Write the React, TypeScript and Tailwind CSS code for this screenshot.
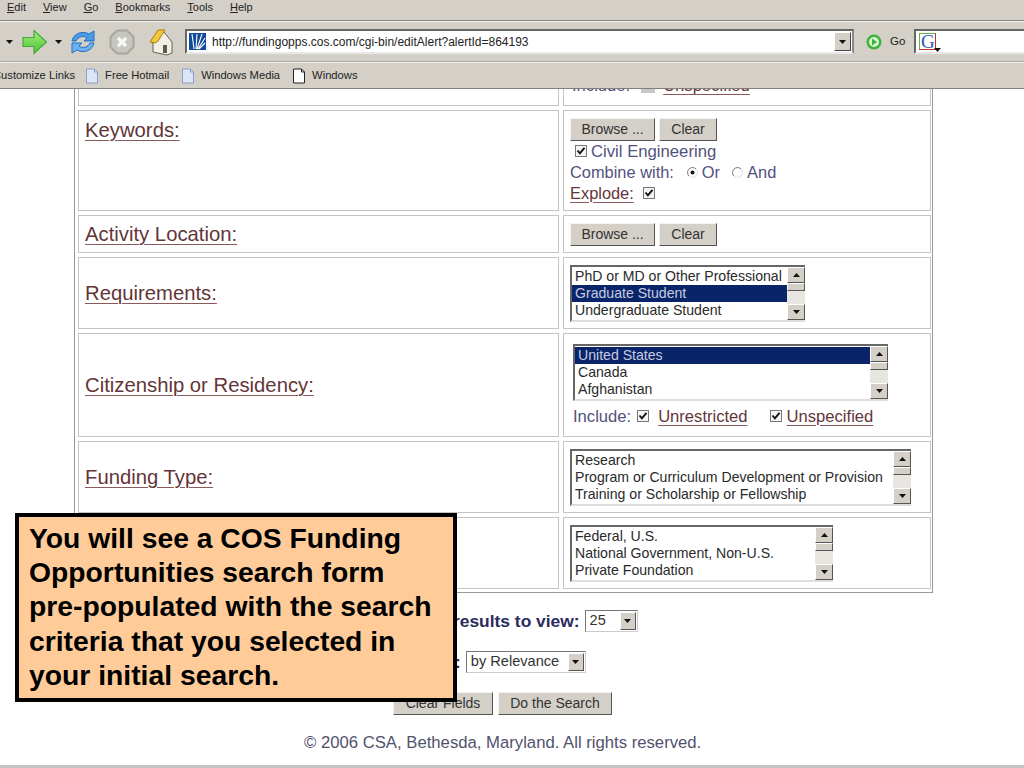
import React from "react";

const labelText = "text-[#633538] underline underline-offset-[3px] decoration-1 decoration-[#8a5a5a]";
const blueText = "text-[#52527e]";

const ArrowDown = () => (
  <svg width="7" height="4" viewBox="0 0 7 4"><path d="M0 0h7L3.5 4z" fill="#111" /></svg>
);

const ArrowUp = () => (
  <svg width="7" height="4" viewBox="0 0 7 4"><path d="M0 4h7L3.5 0z" fill="#111" /></svg>
);

const Check = () => (
  <svg width="12" height="12" viewBox="0 0 12 12" className="shrink-0">
    <rect x="0.5" y="0.5" width="11" height="11" fill="#f4f4f4" stroke="#777" />
    <path d="M2.5 5.5l2.4 2.8 4.6-5.4" fill="none" stroke="#111" strokeWidth="1.9" />
  </svg>
);

const Radio = ({ on }: { on?: boolean }) => (
  <svg width="11" height="11" viewBox="0 0 11 11" className="shrink-0">
    <path d="M2 9a4.8 4.8 0 0 1 7-7" fill="none" stroke="#777" />
    <path d="M9 2a4.8 4.8 0 0 1-7 7" fill="none" stroke="#ddd" />
    {on && <circle cx="5.5" cy="5.5" r="2" fill="#111" />}
  </svg>
);

const Button = ({ children, className = "" }: { children: React.ReactNode; className?: string }) => (
  <div className={`flex items-center justify-center h-[23px] bg-[#d4d0c8] border border-t-[#f4f4f0] border-l-[#f4f4f0] border-r-[#555] border-b-[#555] text-[14px] text-[#333] ${className}`}>
    {children}
  </div>
);

const ListBox = ({
  items,
  selected,
  width,
}: {
  items: string[];
  selected?: number;
  width: string;
}) => (
  <div className={`flex h-[57px] bg-white border-2 border-r-0 border-t-[#666] border-l-[#666] border-b-[#ddd] overflow-hidden ${width}`}>
    <div className="flex-1 min-w-0 pt-[1px] text-[14.1px] leading-[17px] text-[#2a2a2a] whitespace-nowrap">
      {items.map((item, i) => (
        <div key={item} className={`pl-[3px] h-[17px] ${i === selected ? "bg-[#0a246a] text-[#c8cce0]" : ""}`}>
          {item}
        </div>
      ))}
    </div>
    <div className="w-[18px] flex flex-col bg-[#e8e6e0]">
      <div className="h-[16px] flex items-center justify-center bg-[#d4d0c8] border border-t-[#fff] border-l-[#fff] border-r-[#555] border-b-[#555]">
        <ArrowUp />
      </div>
      <div className="h-[8px] bg-[#d4d0c8] border border-r-[#555] border-b-[#555] border-t-[#fff] border-l-[#fff]" />
      <div className="flex-1" />
      <div className="h-[16px] flex items-center justify-center bg-[#d4d0c8] border border-t-[#fff] border-l-[#fff] border-r-[#555] border-b-[#555]">
        <ArrowDown />
      </div>
    </div>
  </div>
);

const Dropdown = ({ value, width }: { value: string; width: string }) => (
  <div className={`flex items-center h-[22px] bg-white border border-t-[#777] border-l-[#777] border-r-[#ccc] border-b-[#ccc] pl-[4px] pr-[1px] text-[14.6px] font-normal text-[#333] ${width}`}>
    <span className="flex-1">{value}</span>
    <div className="w-[16px] h-[18px] flex items-center justify-center bg-[#d4d0c8] border border-t-[#fff] border-l-[#fff] border-r-[#555] border-b-[#555]">
      <ArrowDown />
    </div>
  </div>
);

const Row = ({
  label,
  height,
  top,
  children,
}: {
  label?: string;
  height: string;
  top?: boolean;
  children: React.ReactNode;
}) => (
  <div className={`flex gap-[4px] ${height}`}>
    <div className={`w-[481px] border border-[#c4c4c4] pl-[6px] flex text-[20.3px] ${top ? "pt-[4px]" : "items-center"}`}>
      {label && <span className={labelText}>{label}</span>}
    </div>
    <div className="w-[368px] border border-[#c4c4c4] pl-[6px] flex flex-col justify-center">
      {children}
    </div>
  </div>
);

const MenuBar = () => (
  <div className="h-[21px] flex items-center gap-[17px] pl-[7px] pb-[5px] text-[11px] text-[#222] border-b border-[#808080]">
    {["Edit", "View", "Go", "Bookmarks", "Tools", "Help"].map((m) => (
      <span key={m}>
        <span className="underline">{m[0]}</span>
        {m.slice(1)}
      </span>
    ))}
  </div>
);

const PageIcon = ({ tint }: { tint: string }) => (
  <svg width="14" height="16" viewBox="0 0 14 16" className="shrink-0">
    <path d="M1.5 1h8l3 3v11h-11z" fill={tint} stroke={tint === "#fff" ? "#222" : "#8aa0c8"} />
    <path d="M9.5 1v3h3" fill="none" stroke={tint === "#fff" ? "#222" : "#8aa0c8"} />
  </svg>
);

const Toolbar = () => (
  <div className="h-[41px] flex items-center border-t border-t-[#f4f4f0] border-b border-b-[#a8a8a0] relative">
    <div className="ml-[6px]"><ArrowDown /></div>
    <svg width="26" height="26" viewBox="0 0 26 26" className="ml-[9px]">
      <defs>
        <linearGradient id="fwd" x1="0" y1="0" x2="0" y2="1">
          <stop offset="0" stopColor="#a6ee7a" />
          <stop offset="1" stopColor="#48c438" />
        </linearGradient>
      </defs>
      <path d="M1 8.5h11V1.5L24.5 13 12 24.5v-7H1z" fill="url(#fwd)" stroke="#46a83a" strokeWidth="1.2" />
    </svg>
    <div className="ml-[7px]"><ArrowDown /></div>
    <svg width="26" height="26" viewBox="0 0 26 26" className="ml-[8px]">
      <path d="M2 12C3 5 12 1 19 5l5-3v10h-10l3-3C13 6 8 8 6 12z" fill="#4a9ae8" stroke="#1f6fc0" />
      <path d="M24 14c-1 7-10 11-17 7l-5 3V14h10l-3 3c4 3 9 1 11-3z" fill="#6db2f0" stroke="#1f6fc0" />
    </svg>
    <svg width="26" height="26" viewBox="0 0 26 26" className="ml-[13px]">
      <path d="M8 1.5h10L24.5 8v10L18 24.5H8L1.5 18V8z" fill="#c8c6c0" stroke="#a8a6a0" strokeWidth="2" />
      <path d="M9 9l8 8M17 9l-8 8" stroke="#f8f8f4" strokeWidth="3.2" />
    </svg>
    <svg width="28" height="28" viewBox="0 0 28 28" className="ml-[13px]">
      <path d="M5 13L11 4h5l8 10v11l-5 2-14-3z" fill="#f2efe6" stroke="#66625a" />
      <path d="M2 14L10 2h7l-7 11-3 2z" fill="#f2c840" stroke="#a88010" />
      <path d="M15 25v-8h4v8z" fill="#5a5a54" />
    </svg>
    <div className="ml-[9px] w-[669px] h-[25px] flex items-center bg-white border-2 border-t-[#666] border-l-[#666] border-r-[#888] border-b-[#e8e8e8]">
      <svg width="17" height="17" viewBox="0 0 17 17" className="ml-[2px]">
        <rect width="17" height="17" fill="#124a9a" />
        <path d="M3 1L5 16M8 1L7 16M13 1L8 16M16 5L9 16M16 10L10 16" stroke="#fff" strokeWidth="1.1" />
      </svg>
      <span className="ml-[6px] flex-1 text-[12px] text-[#222]">http://fundingopps.cos.com/cgi-bin/editAlert?alertId=864193</span>
      <div className="w-[17px] h-[19px] flex items-center justify-center bg-[#d4d0c8] border border-t-[#fff] border-l-[#fff] border-r-[#444] border-b-[#444] mr-[1px]">
        <ArrowDown />
      </div>
    </div>
    <svg width="16" height="16" viewBox="0 0 16 16" className="ml-[12px]">
      <circle cx="8" cy="8" r="7.5" fill="#3cb43c" />
      <circle cx="8" cy="8" r="5" fill="#d8f4d0" />
      <path d="M6 4.5l5 3.5-5 3.5z" fill="#3cb43c" />
    </svg>
    <span className="ml-[8px] text-[11.5px] text-[#222]">Go</span>
    <div className="ml-[9px] flex-1 h-[25px] flex items-center bg-white border-2 border-r-0 border-t-[#666] border-l-[#666] border-b-[#e8e8e8]">
      <div className="relative ml-[3px] w-[17px] h-[17px] border border-t-[#6ab04a] border-l-[#6ab04a] border-r-[#c03020] border-b-[#c03020] flex items-center justify-center text-[19px] leading-none text-[#2a5ab8] font-['Liberation_Serif',serif]">
        G
        <div className="absolute -right-[6px] -bottom-[3px] flex"><ArrowDown /></div>
      </div>
    </div>
  </div>
);

const LinksBar = () => (
  <div className="h-[27px] flex items-center text-[11.2px] text-[#222] border-t border-t-[#f4f4f0] border-b border-b-[#808080] whitespace-nowrap overflow-hidden">
    <span className="-ml-[7px]">Customize Links</span>
    <div className="ml-[10px]"><PageIcon tint="#dce6f6" /></div>
    <span className="ml-[6px]">Free Hotmail</span>
    <div className="ml-[12px]"><PageIcon tint="#dce6f6" /></div>
    <span className="ml-[6px]">Windows Media</span>
    <div className="ml-[12px]"><PageIcon tint="#fff" /></div>
    <span className="ml-[6px]">Windows</span>
  </div>
);

export default function App() {
  return (
    <div className="relative w-[1024px] h-[768px] overflow-hidden bg-white font-['Liberation_Sans',Arial,sans-serif]">
      <div className="relative z-10 bg-[#d4d0c8]">
        <MenuBar />
        <Toolbar />
        <LinksBar />
      </div>

      {/* form table */}
      <div className="ml-[74px] w-[859px] h-[504px] border-l border-r border-b border-[#999] pl-[3px] flex flex-col gap-[4px] overflow-hidden">
        <div className="flex gap-[4px] h-[17px]">
          <div className="w-[481px] border border-t-0 border-[#c4c4c4]" />
          <div className="w-[368px] border border-t-0 border-[#c4c4c4] pl-[8px] overflow-hidden">
            <div className={`-mt-[15px] flex items-center text-[16.6px] ${blueText}`}>
              <span>Include:</span>
              <span className="ml-[11px] w-[14px] h-[14px] bg-[#c8c8c8]" />
              <span className={`ml-[8px] ${labelText}`}>Unspecified</span>
            </div>
          </div>
        </div>

        <Row label="Keywords:" height="h-[101px]" top>
          <div className="flex gap-[4px]">
            <Button className="w-[85px]">Browse ...</Button>
            <Button className="w-[58px]">Clear</Button>
          </div>
          <div className={`flex items-center gap-[4px] pl-[5px] text-[16.7px] leading-[21px] ${blueText}`}>
            <Check />
            <span>Civil Engineering</span>
          </div>
          <div className={`flex items-center text-[16.4px] leading-[21px] ${blueText}`}>
            <span>Combine with:</span>
            <span className="ml-[13px]"><Radio on /></span>
            <span className="ml-[4px]">Or</span>
            <span className="ml-[12px]"><Radio /></span>
            <span className="ml-[4px]">And</span>
          </div>
          <div className="flex items-center gap-[9px] text-[16.4px] leading-[21px]">
            <span className={labelText}>Explode:</span>
            <Check />
          </div>
        </Row>

        <Row label="Activity Location:" height="h-[38px]">
          <div className="flex gap-[4px]">
            <Button className="w-[85px]">Browse ...</Button>
            <Button className="w-[58px]">Clear</Button>
          </div>
        </Row>

        <Row label="Requirements:" height="h-[72px]">
          <ListBox
            width="w-[235px]"
            selected={1}
            items={["PhD or MD or Other Professional", "Graduate Student", "Undergraduate Student"]}
          />
        </Row>

        <Row label="Citizenship or Residency:" height="h-[104px]">
          <div className="pl-[3px]">
            <ListBox width="w-[315px]" selected={0} items={["United States", "Canada", "Afghanistan"]} />
          </div>
          <div className={`mt-[5px] pl-[3px] flex items-center text-[16.6px] leading-[21px] ${blueText}`}>
            <span>Include:</span>
            <span className="ml-[6px]"><Check /></span>
            <span className={`ml-[9px] ${labelText}`}>Unrestricted</span>
            <span className="ml-[22px]"><Check /></span>
            <span className={`ml-[5px] ${labelText}`}>Unspecified</span>
          </div>
        </Row>

        <Row label="Funding Type:" height="h-[72px]">
          <ListBox
            width="w-[341px]"
            items={["Research", "Program or Curriculum Development or Provision", "Training or Scholarship or Fellowship"]}
          />
        </Row>

        <Row height="h-[72px]">
          <ListBox
            width="w-[263px]"
            items={["Federal, U.S.", "National Government, Non-U.S.", "Private Foundation"]}
          />
        </Row>
      </div>

      {/* options below the table */}
      <div className="ml-[393px] mt-[16px] flex items-center h-[24px] text-[17.4px] font-bold text-[#2c2c5c]">
        <span className="ml-[60px]">results to view:</span>
        <div className="ml-[5px]"><Dropdown value="25" width="w-[53px]" /></div>
      </div>
      <div className="ml-[393px] mt-[17px] flex items-center h-[24px] text-[17.4px] font-bold text-[#2c2c5c]">
        <span className="ml-[62px]">:</span>
        <div className="ml-[5px]"><Dropdown value="by Relevance" width="w-[120px]" /></div>
      </div>
      <div className="ml-[393px] mt-[18px] flex gap-[5px]">
        <Button className="w-[100px]">Clear Fields</Button>
        <Button className="w-[114px]">Do the Search</Button>
      </div>
      <div className="mt-[18px] ml-[304px] text-[16.7px] leading-[20px] text-[#52526e]">
        © 2006 CSA, Bethesda, Maryland. All rights reserved.
      </div>
      <div className="absolute left-0 right-0 bottom-0 h-[3px] bg-[#c4c4c0]" />

      {/* callout */}
      <div className="absolute left-[15px] top-[513px] w-[442px] h-[189px] bg-[#ffcc99] border-[4px] border-black pl-[10px] pt-[4px] text-[28.3px] leading-[34.2px] font-bold text-black whitespace-nowrap">
        <div>You will see a COS Funding</div>
        <div>Opportunities search form</div>
        <div>pre-populated with the search</div>
        <div>criteria that you selected in</div>
        <div>your initial search.</div>
      </div>
    </div>
  );
}
